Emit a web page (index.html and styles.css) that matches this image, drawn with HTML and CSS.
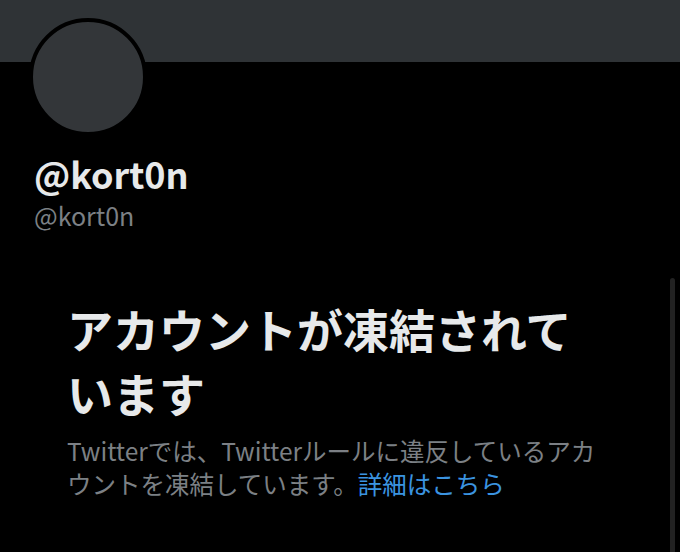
FILE: index.html
```html
<!DOCTYPE html>
<html lang="ja">
<head>
  <meta charset="UTF-8">
  <meta name="viewport" content="width=device-width, initial-scale=1.0">
  <title>@kort0n</title>
  <link rel="stylesheet" href="styles.css">
</head>
<body>
  <!-- Header banner -->
  <div class="banner"></div>

  <!-- Profile -->
  <div class="profile">
    <div class="avatar"></div>
    <h1 class="display-name">@kort0n</h1>
    <p class="handle">@kort0n</p>
  </div>

  <!-- Suspended notice -->
  <div class="notice">
    <h2 class="notice-title">アカウントが凍結されています</h2>
    <p class="notice-text">Twitterでは、Twitterルールに違反しているアカウントを凍結しています。<a href="#" class="link">詳細はこちら</a></p>
  </div>

  <div class="scrollbar"></div>
</body>
</html>
```

FILE: styles.css
```css
body {
  margin: 0;
  padding: 0;
  background-color: #000;
  font-family: "Noto Sans CJK JP", "Noto Sans", sans-serif;
  color: #e7e9ea;
  overflow: hidden;
}

.banner {
  height: 62px;
  background-color: #2f3336;
}

.profile {
  padding: 0 0 0 34px;
}

.avatar {
  width: 110px;
  height: 110px;
  margin: -44px 0 0 -5px;
  border: 4px solid #000;
  border-radius: 50%;
  background-color: #333639;
}

.display-name {
  margin: 14px 0 0;
  font-size: 36px;
  font-weight: 700;
  line-height: 46px;
}

.handle {
  margin: 2px 0 0;
  font-size: 25px;
  line-height: 34px;
  color: #7c8085;
}

.notice {
  width: 545px;
  padding: 64px 0 0 67px;
}

.notice-title {
  margin: 0;
  font-size: 46px;
  font-weight: 700;
  line-height: 64px;
}

.notice-text {
  margin: 10px 0 0;
  font-size: 24.5px;
  line-height: 33px;
  color: #7c8085;
}

.link {
  color: #3b94e0;
  text-decoration: none;
}

.scrollbar {
  position: absolute;
  top: 278px;
  right: 5px;
  width: 5px;
  height: 300px;
  border-radius: 3px 3px 0 0;
  background-color: #222;
}
```
